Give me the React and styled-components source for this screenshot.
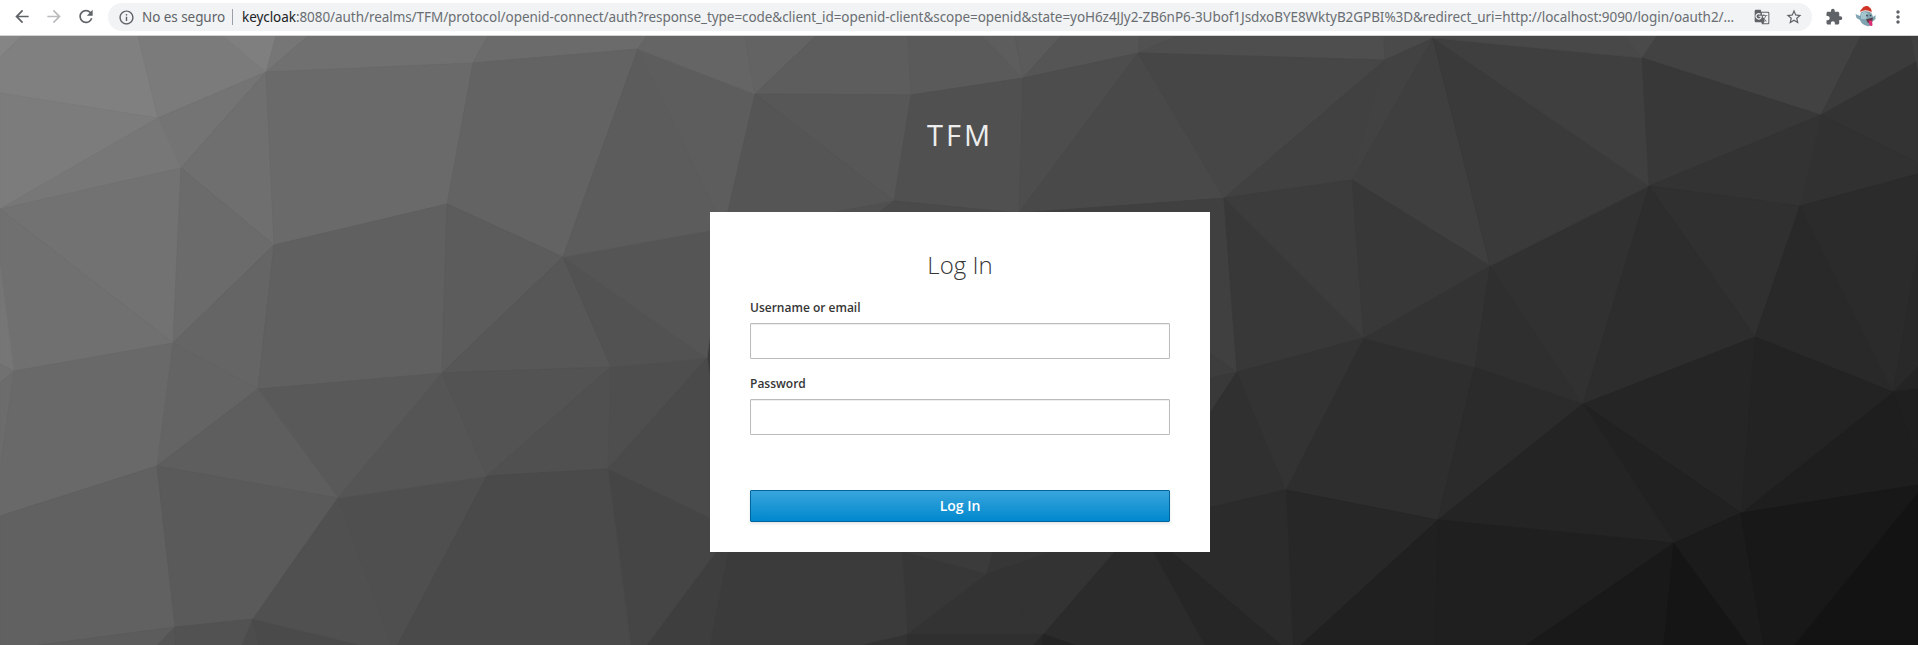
import React from "react";
import styled, { createGlobalStyle } from "styled-components";
import {
  MdArrowBack,
  MdArrowForward,
  MdRefresh,
  MdInfoOutline,
  MdGTranslate,
  MdStarBorder,
  MdExtension,
  MdMoreVert,
} from "react-icons/md";

const GlobalStyle = createGlobalStyle`
  *, *::before, *::after { box-sizing: border-box; }
  body { margin: 0; overflow: hidden; font-family: "Open Sans", "Noto Sans", sans-serif; }
`;

const Screen = styled.div`
  display: flex;
  flex-direction: column;
  height: 645px;
`;

const Toolbar = styled.header`
  display: flex;
  align-items: center;
  flex: none;
  height: 36px;
  padding: 0 10px 2px 12px;
  background: #fff;
  border-bottom: 1px solid #d2d3d5;
  color: #5f6368;
`;

const IconButton = styled.span`
  display: flex;
  align-items: center;
  justify-content: center;
  flex: none;
  width: ${(p) => p.$width || 20}px;
  height: 20px;
  margin-right: ${(p) => p.$gap || 0}px;
  color: ${(p) => p.$color || "#5f6368"};
`;

const AddressBar = styled.div`
  display: flex;
  align-items: center;
  flex: 1;
  height: 28px;
  margin: 1px 12px 0 0;
  padding: 0 8px;
  border-radius: 14px;
  background: #f1f3f4;
  font-family: "Noto Sans", "Open Sans", sans-serif;
  font-size: 13.5px;
  letter-spacing: -0.06px;
  white-space: nowrap;
`;

const Security = styled.span`
  width: 83px;
  margin-left: 6px;
`;

const Divider = styled.span`
  width: 1px;
  height: 16px;
  margin: 0 9px 0 7px;
  background: #9aa0a6;
`;

const Url = styled.span`
  flex: 1;
  color: #6a6e73;
`;

const Host = styled.span`
  color: #202124;
`;

const Page = styled.main`
  display: grid;
  flex: 1;
  min-height: 0;
  background: #3b3b3b;
`;

const Backdrop = styled.svg`
  grid-area: 1 / 1;
  display: block;
  width: 1918px;
  height: 609px;
`;

const Content = styled.div`
  grid-area: 1 / 1;
  z-index: 1;
  display: flex;
  flex-direction: column;
  align-items: center;
  padding-left: 2px;
`;

const Realm = styled.div`
  height: 176px;
  padding-top: 81px;
  font-size: 29px;
  line-height: 35px;
  letter-spacing: 3px;
  color: #ededed;
`;

const Card = styled.form`
  display: flex;
  flex-direction: column;
  width: 500px;
  height: 340px;
  padding: 37px 40px 30px;
  background: #fff;
`;

const Title = styled.h1`
  margin: 0 0 18px;
  font-size: 24px;
  font-weight: 300;
  line-height: 32px;
  text-align: center;
  color: #363636;
`;

const Field = styled.label`
  display: flex;
  flex-direction: column;
  gap: 6px;
  margin-bottom: 16px;
  font-size: 12px;
  font-weight: 600;
  line-height: 18px;
  color: #363636;
`;

const Input = styled.input`
  width: 100%;
  height: 36px;
  padding: 2px 6px;
  border: 1px solid #bbb;
  border-radius: 1px;
  outline: none;
  box-shadow: inset 0 1px 1px rgba(3, 3, 3, 0.075);
`;

const Submit = styled.button`
  height: 32px;
  margin-top: 39px;
  padding: 0 0 2px;
  border: 1px solid #00659c;
  border-radius: 1px;
  background: linear-gradient(#39a5dc, #0088ce);
  box-shadow: 0 2px 3px rgba(3, 3, 3, 0.1);
  font-family: inherit;
  font-size: 14px;
  font-weight: 600;
  color: #fff;
`;

// Mesh vertices of the polygon backdrop.
const V = {
  A: [158, 117], B: [266, 71], C: [0, 208], D: [181, 167], E: [274, 244],
  F: [473, 62], G: [447, 203], H: [173, 342], I: [14, 370], J: [258, 388],
  K: [442, 372], L: [157, 465], M: [338, 497], N: [487, 475], O: [175, 626],
  P: [253, 618], R: [638, 48], S: [755, 93], T: [911, 94], U: [894, 200],
  W: [611, 366], X: [707, 357], Y: [608, 468], Z: [724, 227], Q: [563, 256],
  aa: [733, 528], bb: [907, 633], cc: [986, 573], dd: [1043, 633],
  ee: [1138, 523], ff: [1286, 489], gg: [1023, 77], hh: [1138, 52],
  ii: [1019, 212], jj: [1224, 197], kk: [1385, 59], ll: [1352, 179],
  mm: [1433, 37], nn: [1364, 337], oo: [1237, 371], qq: [1438, 519],
  rr: [1490, 265], ss: [1475, 366], tt: [1642, 57], uu: [1649, 185],
  vv: [1821, 114], ww: [1916, 61], xx: [1800, 205], yy: [1755, 336],
  zz: [1893, 391], a: [1583, 403], b: [1741, 512], c: [1674, 542],
};

// Each face is a grey level followed by vertex names or literal edge points.
const FACES = [
  ["85", "0,35 22,35 0,56"], ["80", "22,35 138,35 A 0,92 0,56"],
  ["7c", "0,92 A C"], ["7b", "138,35 223,35 B A"], ["7f", "223,35 276,35 B"],
  ["76", "276,35 308,35 B"], ["70", "308,35 488,35 F B"], ["74", "A B D"],
  ["77", "C A D"], ["6f", "B D E"], ["6a", "B F G E"], ["72", "C D H"],
  ["70", "C H I 0,265"], ["76", "0,265 I 0,363"], ["71", "0,363 I 0,382"],
  ["6c", "0,382 I 0,469"], ["6b", "D E H"], ["69", "I H L 0,515 0,469"],
  ["65", "H E J"], ["64", "H J L"], ["60", "E G K J"], ["59", "J K M"],
  ["5e", "L J M"], ["61", "0,515 L O 32,645 0,645"], ["5c", "O 32,645 157,645"],
  ["54", "O 157,645 176,645"], ["5a", "L M P O"], ["52", "O P 242,645 176,645"],
  ["4c", "P 242,645 259,645"], ["4a", "P 259,645 365,645"],
  ["50", "M P 365,645 392,645"], ["4f", "M N 397,645 392,645"], ["55", "K M N"],
  ["6b", "F 488,35 647,35 R"], ["63", "F R Q G"], ["5c", "G Q K"],
  ["57", "Q K W"], ["53", "K W N"], ["50", "N W Y"], ["4e", "W X Y"],
  ["52", "Q W X"], ["55", "Q X Z"], ["5c", "R Q Z"], ["5d", "R S Z"],
  ["65", "R 647,35 745,35 S"], ["63", "S 745,35 816,35"],
  ["5d", "S 816,35 908,35 T"], ["5a", "T 908,35 982,35 gg"], ["57", "S T U"],
  ["55", "S U 830,212 Z"], ["50", "U 830,212 878,212"], ["50", "T gg ii U"],
  ["4a", "U 878,212 ii"], ["5d", "gg 982,35 1015,35"], ["5b", "gg 1015,35 1061,35"],
  ["55", "gg 1061,35 1140,35 hh"], ["51", "hh 1140,35 1178,35"],
  ["4e", "hh 1178,35 1384,35 kk"], ["4d", "gg hh ii"], ["49", "hh ii jj"],
  ["40", "ii jj oo 1210,352 1050,250"], ["46", "hh kk jj"], ["41", "kk jj ll"],
  ["4a", "kk 1384,35 1433,35 mm"], ["42", "kk mm ll"], ["3f", "mm ll rr"],
  ["3c", "jj ll nn"], ["38", "jj nn oo"], ["38", "ll rr nn"],
  ["3d", "oo 1210,352 1210,377"], ["39", "oo 1210,377 1210,412"],
  ["30", "oo 1210,412 1205,507 ff"], ["33", "oo nn ff"], ["2e", "nn ss qq ff"],
  ["33", "nn rr ss"], ["2b", "ss qq a"], ["2f", "rr ss a"], ["31", "rr uu a"],
  ["3a", "mm rr uu"], ["3f", "mm tt uu"], ["48", "mm 1433,35 1624,35 tt"],
  ["4a", "tt 1624,35 1657,35"], ["42", "tt 1657,35 1861,35 vv"],
  ["38", "tt uu vv"], ["3b", "vv 1861,35 1911,35 ww"],
  ["40", "ww 1911,35 1918,35 1918,75"], ["33", "vv ww 1918,75 1918,162"],
  ["31", "vv 1918,162 1918,173 xx"], ["33", "uu vv xx"], ["30", "uu xx yy"],
  ["29", "xx yy zz"], ["2b", "xx zz 1918,250 1918,173"],
  ["29", "zz 1918,250 1918,366"], ["24", "zz 1918,366 1918,388"],
  ["1f", "zz 1918,388 1918,462"], ["1e", "zz 1918,462 1918,484 b"],
  ["23", "yy zz b"], ["2d", "uu yy a"], ["25", "a yy b"], ["21", "a b c"],
  ["24", "qq a c"], ["1f", "qq c 1525,645 1435,645"], ["19", "c 1525,645 1664,645"],
  ["15", "c 1664,645 1749,645"], ["1b", "c b 1764,645 1749,645"],
  ["18", "b 1764,645 1794,645 1918,492 1918,484"],
  ["13", "1918,492 1794,645 1918,645"], ["27", "qq ff 1293,645 1300,645"],
  ["20", "qq 1300,645 1435,645"], ["2b", "ff ee 1282,645 1293,645"],
  ["26", "ee 1205,645 1282,645"], ["2b", "ee dd 1077,645 1205,645"],
  ["24", "dd 1042,645 1077,645"], ["27", "dd 1032,645 1042,645"],
  ["2f", "dd bb 906,645 1032,645"], ["33", "bb 857,645 906,645"],
  ["33", "cc bb dd"], ["33", "cc dd ee 1050,552"], ["36", "cc 1050,551 992,551"],
  ["3b", "cc 992,551 905,551"], ["37", "bb 902,551 cc"],
  ["3b", "aa 902,551 bb 857,645 710,645"], ["3e", "aa 646,645 710,645"],
  ["45", "Y aa 646,645 631,645"], ["4a", "N Y 631,645 397,645"], ["4a", "Y aa X"],
];

const toPoints = (path) =>
  path.split(" ").map((p) => (V[p] ? V[p].join(",") : p)).join(" ");

function PolygonBackdrop() {
  return (
    <Backdrop viewBox="0 35 1918 609" aria-hidden="true">
      {FACES.map(([shade, path]) => {
        const fill = `#${shade}${shade}${shade}`;
        return (
          <polygon key={path} points={toPoints(path)} fill={fill} stroke={fill} strokeWidth="0.8" />
        );
      })}
    </Backdrop>
  );
}

function GhostAvatar() {
  return (
    <svg width="22" height="24" viewBox="0 0 22 24">
      <path d="M6 7 C9 5 15 5 17 9 L18 12 L20.5 10 L20.5 14 L17 17 C17 20 14 22 12 21 C8 20 6 18 5 15 L1.5 13 L0.5 9 L5 11Z" fill="#7fa3b0" />
      <path d="M6 9 C8 6 12 7 13 9 L11 14 L6 14Z" fill="#a5c5cf" />
      <path d="M5 6 L8 2.5 C10 .5 13 .5 14 2 C16 3 17 5 16.5 7.5 C13 5.5 9 5 6 7Z" fill="#cf3527" />
      <path d="M6 7 C9 5 14 5.5 17 8" fill="none" stroke="#e9dedb" strokeWidth="1" />
      <circle cx="12" cy="10.5" r="0.9" fill="#34444c" />
      <circle cx="15.5" cy="10.5" r="0.8" fill="#34444c" />
      <path d="M11 14.5 L18 12.5 L17 17 L13 18Z" fill="#5b3a45" />
      <path d="M13.5 15.5 L17 15.5 L17.5 20 C17 22 15 21 14 19Z" fill="#dc2f74" />
    </svg>
  );
}

export default function App() {
  return (
    <Screen>
      <GlobalStyle />
      <Toolbar>
        <IconButton $gap={12}><MdArrowBack size={21} /></IconButton>
        <IconButton $gap={12} $color="#babcbe"><MdArrowForward size={21} /></IconButton>
        <IconButton $gap={12}><MdRefresh size={21} /></IconButton>
        <AddressBar>
          <IconButton><MdInfoOutline size={17} /></IconButton>
          <Security>No es seguro</Security>
          <Divider />
          <Url>
            <Host>keycloak</Host>:8080/auth/realms/TFM/protocol/openid-connect/auth?response_type=code&amp;client_id=openid-client&amp;scope=openid&amp;state=yoH6z4JJy2-ZB6nP6-3Ubof1JsdxoBYE8WktyB2GPBI%3D&amp;redirect_uri=http://localhost:9090/login/oauth2/...
          </Url>
          <IconButton $gap={12}><MdGTranslate size={16} /></IconButton>
          <IconButton><MdStarBorder size={18} /></IconButton>
        </AddressBar>
        <IconButton $gap={10}><MdExtension size={18} /></IconButton>
        <IconButton $width={24} $gap={10}><GhostAvatar /></IconButton>
        <IconButton><MdMoreVert size={20} /></IconButton>
      </Toolbar>
      <Page>
        <PolygonBackdrop />
        <Content>
          <Realm>TFM</Realm>
          <Card>
            <Title>Log In</Title>
            <Field>
              Username or email
              <Input type="text" />
            </Field>
            <Field>
              Password
              <Input type="password" />
            </Field>
            <Submit type="button">Log In</Submit>
          </Card>
        </Content>
      </Page>
    </Screen>
  );
}
